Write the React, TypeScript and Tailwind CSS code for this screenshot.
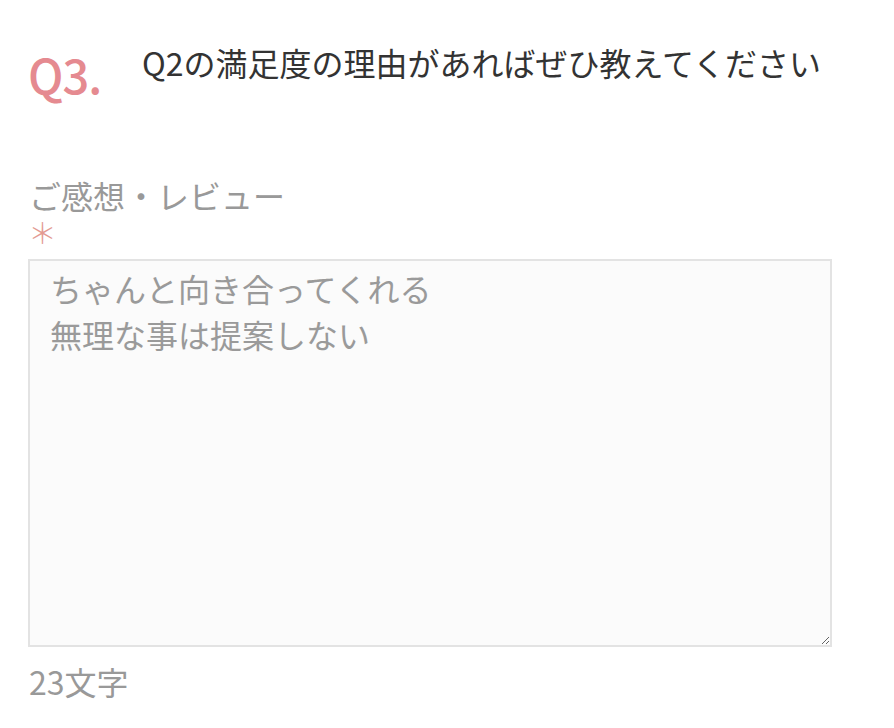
import { useState } from "react";

export default function App() {
  const [review, setReview] = useState("ちゃんと向き合ってくれる\n無理な事は提案しない");

  return (
    <div className="min-h-screen bg-white font-['Noto_Sans_CJK_JP','Noto_Sans',sans-serif]">
      <div className="pl-7 pr-[62px] pt-[38px]">
        {/* 質問見出し */}
        <div className="flex items-start">
          <span className="w-[114px] shrink-0 pt-[4px] text-[47px] leading-[64px] font-medium tracking-[-1px] text-[#e58a90]">
            Q3.
          </span>
          <h2 className="whitespace-nowrap text-[32px] leading-[48px] text-[#333]">
            Q2の満足度の理由があればぜひ教えてください
          </h2>
        </div>

        {/* 入力欄 */}
        <div className="mt-[68px]">
          <label className="block pl-[1px] text-[32px] leading-[42px] text-[#999]">
            ご感想・レビュー
          </label>
          <span className="block text-[29px] leading-[30px] font-light text-[#e39a92]">＊</span>
          <textarea
            value={review}
            onChange={(e) => setReview(e.target.value)}
            className="mt-[13px] block h-[388px] w-full resize-y border-2 border-[#e3e3e3] bg-[#fbfbfb] px-[20px] py-[4px] text-[32px] leading-[46px] text-[#9a9a9a] outline-none"
          />
          <p className="mt-[12px] pl-[1px] text-[32px] leading-[44px] text-[#999]">{review.length}文字</p>
        </div>
      </div>
    </div>
  );
}
